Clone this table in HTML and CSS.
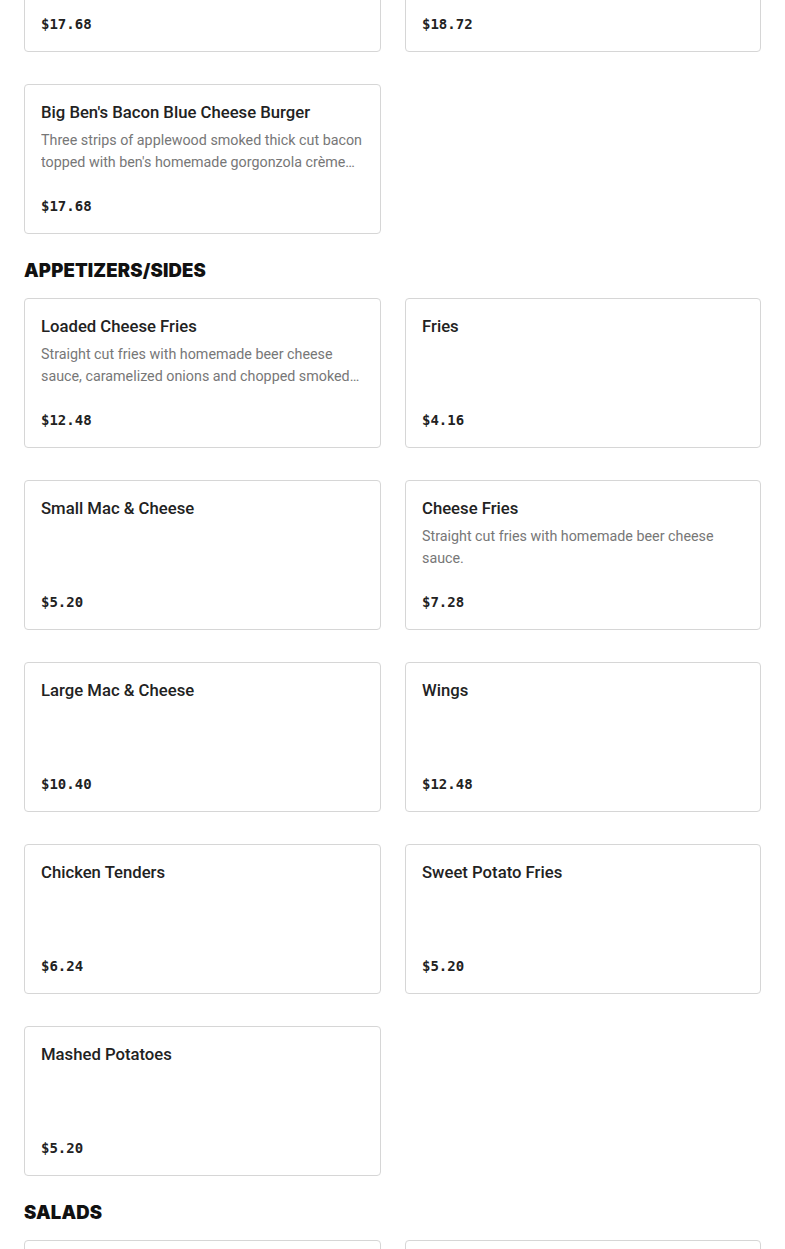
FILE: index.html
```html
<!DOCTYPE html>
<html lang="en">
<head>
<meta charset="utf-8">
<title>Menu</title>
<link rel="stylesheet" href="styles.css">
</head>
<body>
<main class="menu">
  <section class="section section-first">
    <div class="grid">
      <div class="card">
        <div class="price">$17.68</div>
      </div>
      <div class="card">
        <div class="price">$18.72</div>
      </div>
      <div class="card">
        <h3 class="title">Big Ben's Bacon Blue Cheese Burger</h3>
        <p class="desc">Three strips of applewood smoked thick cut bacon topped with ben's homemade gorgonzola crème sauce and crispy onions.</p>
        <div class="price">$17.68</div>
      </div>
    </div>
  </section>

  <section class="section">
    <h2 class="heading">APPETIZERS/SIDES</h2>
    <div class="grid">
      <div class="card">
        <h3 class="title">Loaded Cheese Fries</h3>
        <p class="desc">Straight cut fries with homemade beer cheese sauce, caramelized onions and chopped smoked bacon.</p>
        <div class="price">$12.48</div>
      </div>
      <div class="card">
        <h3 class="title">Fries</h3>
        <div class="price">$4.16</div>
      </div>
      <div class="card">
        <h3 class="title">Small Mac &amp; Cheese</h3>
        <div class="price">$5.20</div>
      </div>
      <div class="card">
        <h3 class="title">Cheese Fries</h3>
        <p class="desc">Straight cut fries with homemade beer cheese sauce.</p>
        <div class="price">$7.28</div>
      </div>
      <div class="card">
        <h3 class="title">Large Mac &amp; Cheese</h3>
        <div class="price">$10.40</div>
      </div>
      <div class="card">
        <h3 class="title">Wings</h3>
        <div class="price">$12.48</div>
      </div>
      <div class="card">
        <h3 class="title">Chicken Tenders</h3>
        <div class="price">$6.24</div>
      </div>
      <div class="card">
        <h3 class="title">Sweet Potato Fries</h3>
        <div class="price">$5.20</div>
      </div>
      <div class="card">
        <h3 class="title">Mashed Potatoes</h3>
        <div class="price">$5.20</div>
      </div>
    </div>
  </section>

  <section class="section">
    <h2 class="heading">SALADS</h2>
    <div class="grid">
      <div class="card"></div>
      <div class="card"></div>
    </div>
  </section>
</main>
</body>
</html>
```

FILE: styles.css
```css
* { box-sizing: border-box; }

html, body {
  margin: 0;
  padding: 0;
  background: #ffffff;
}

body {
  font-family: "Roboto", "Noto Sans", sans-serif;
  color: #222222;
}

.menu {
  padding: 0 24px;
  margin-top: -98px;
}

.section {
  margin-top: 24px;
}

.section-first {
  margin-top: 0;
}

.heading {
  margin: 0 0 16px;
  height: 24px;
  line-height: 24px;
  font-family: "Inter", "Noto Sans", sans-serif;
  font-size: 18.5px;
  font-weight: 900;
  letter-spacing: 0.15px;
  color: #111111;
}

.grid {
  display: grid;
  grid-template-columns: 357px 356px;
  column-gap: 24px;
  row-gap: 32px;
}

.card {
  height: 150px;
  border: 1px solid #d6d6d6;
  border-radius: 4px;
  padding: 16px;
  display: flex;
  flex-direction: column;
  overflow: hidden;
}

.title {
  margin: 0 0 4px;
  font-size: 16.7px;
  line-height: 24px;
  font-weight: 500;
  color: #222222;
}

.desc {
  margin: 0;
  font-size: 14.3px;
  line-height: 22px;
  color: #777777;
  display: -webkit-box;
  -webkit-line-clamp: 2;
  -webkit-box-orient: vertical;
  overflow: hidden;
}

.price {
  margin-top: auto;
  font-family: "DejaVu Sans Mono", "Liberation Mono", monospace;
  font-weight: bold;
  font-size: 14px;
  line-height: 22px;
  color: #222222;
}
```
